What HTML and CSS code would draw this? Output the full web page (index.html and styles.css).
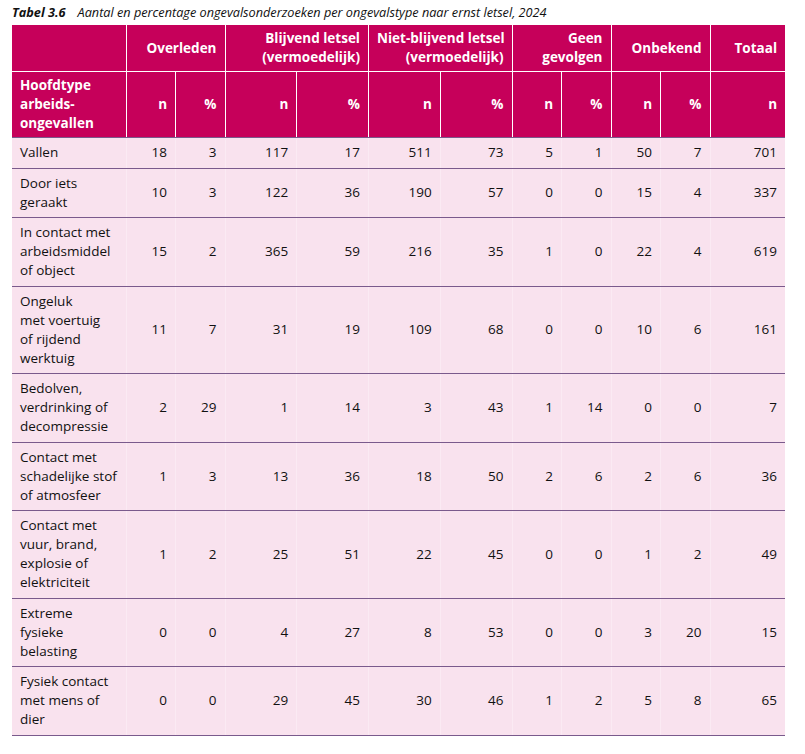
FILE: index.html
```html
<!DOCTYPE html>
<html lang="nl">
<head>
<meta charset="utf-8">
<title>Tabel 3.6</title>
<link rel="stylesheet" href="styles.css">
</head>
<body>
<div class="page">
  <p class="caption"><span class="caption-num">Tabel 3.6</span><span class="caption-text">Aantal en percentage ongevalsonderzoeken per ongevalstype naar ernst letsel, 2024</span></p>
  <table class="data">
    <colgroup>
      <col class="c-label">
      <col class="c-n"><col class="c-n">
      <col class="c-w"><col class="c-w">
      <col class="c-w"><col class="c-w">
      <col class="c-n"><col class="c-n">
      <col class="c-n"><col class="c-n">
      <col class="c-t">
    </colgroup>
    <thead>
      <tr class="h1">
        <th></th>
        <th colspan="2">Overleden</th>
        <th colspan="2">Blijvend letsel<br>(vermoedelijk)</th>
        <th colspan="2">Niet-blijvend letsel<br>(vermoedelijk)</th>
        <th colspan="2">Geen<br>gevolgen</th>
        <th colspan="2">Onbekend</th>
        <th>Totaal</th>
      </tr>
      <tr class="h2">
        <th class="lbl">Hoofdtype<br>arbeids-<br>ongevallen</th>
        <th>n</th><th>%</th>
        <th>n</th><th>%</th>
        <th>n</th><th>%</th>
        <th>n</th><th>%</th>
        <th>n</th><th>%</th>
        <th>n</th>
      </tr>
    </thead>
    <tbody>
      <tr><td class="lbl">Vallen</td><td>18</td><td>3</td><td>117</td><td>17</td><td>511</td><td>73</td><td>5</td><td>1</td><td>50</td><td>7</td><td>701</td></tr>
      <tr><td class="lbl">Door iets<br>geraakt</td><td>10</td><td>3</td><td>122</td><td>36</td><td>190</td><td>57</td><td>0</td><td>0</td><td>15</td><td>4</td><td>337</td></tr>
      <tr><td class="lbl">In contact met<br>arbeidsmiddel<br>of object</td><td>15</td><td>2</td><td>365</td><td>59</td><td>216</td><td>35</td><td>1</td><td>0</td><td>22</td><td>4</td><td>619</td></tr>
      <tr><td class="lbl">Ongeluk<br>met voertuig<br>of rijdend<br>werktuig</td><td>11</td><td>7</td><td>31</td><td>19</td><td>109</td><td>68</td><td>0</td><td>0</td><td>10</td><td>6</td><td>161</td></tr>
      <tr><td class="lbl">Bedolven,<br>verdrinking of<br>decompressie</td><td>2</td><td>29</td><td>1</td><td>14</td><td>3</td><td>43</td><td>1</td><td>14</td><td>0</td><td>0</td><td>7</td></tr>
      <tr><td class="lbl">Contact met<br>schadelijke stof<br>of atmosfeer</td><td>1</td><td>3</td><td>13</td><td>36</td><td>18</td><td>50</td><td>2</td><td>6</td><td>2</td><td>6</td><td>36</td></tr>
      <tr><td class="lbl">Contact met<br>vuur, brand,<br>explosie of<br>elektriciteit</td><td>1</td><td>2</td><td>25</td><td>51</td><td>22</td><td>45</td><td>0</td><td>0</td><td>1</td><td>2</td><td>49</td></tr>
      <tr><td class="lbl">Extreme<br>fysieke<br>belasting</td><td>0</td><td>0</td><td>4</td><td>27</td><td>8</td><td>53</td><td>0</td><td>0</td><td>3</td><td>20</td><td>15</td></tr>
      <tr><td class="lbl">Fysiek contact<br>met mens of<br>dier</td><td>0</td><td>0</td><td>29</td><td>45</td><td>30</td><td>46</td><td>1</td><td>2</td><td>5</td><td>8</td><td>65</td></tr>
    </tbody>
  </table>
</div>
</body>
</html>
```
FILE: styles.css
```css
html, body {
  margin: 0;
  padding: 0;
  background: #ffffff;
}

.page {
  padding: 0 0 0 12px;
  font-family: "Open Sans", "Noto Sans", sans-serif;
  color: #111111;
}

.caption {
  margin: 0;
  height: 25px;
  padding-top: 3px;
  box-sizing: border-box;
  font-size: 12.7px;
  line-height: 18px;
  font-style: italic;
  color: #111111;
  white-space: nowrap;
}

.caption-num {
  font-weight: 700;
  margin-right: 12px;
}

.data {
  border-collapse: collapse;
  table-layout: fixed;
  width: 773px;
  font-size: 13.5px;
  line-height: 19px;
}

.c-label { width: 114px; }
.c-n { width: 49.5px; }
.c-w { width: 71.75px; }
.c-t { width: 75px; }

.data th {
  background: #c6005a;
  color: #ffffff;
  font-weight: 700;
  text-align: right;
  vertical-align: middle;
  padding: 4px 8px;
  border-left: 1px solid #ffffff;
  white-space: nowrap;
}

.data th:first-child {
  border-left: none;
}

.h1 th {
  border-bottom: 1px solid #ffffff;
}

.h2 th {
  border-bottom: 1px solid #7a5a8c;
}

.data th.lbl {
  text-align: left;
}

.data td {
  background: #f9e2ee;
  text-align: right;
  vertical-align: middle;
  padding: 5.25px 8px;
  border-bottom: 1px solid #7a5a8c;
  border-left: 1px solid #fbeaf3;
  white-space: nowrap;
}

.data td.lbl {
  text-align: left;
  border-left: none;
}
```
